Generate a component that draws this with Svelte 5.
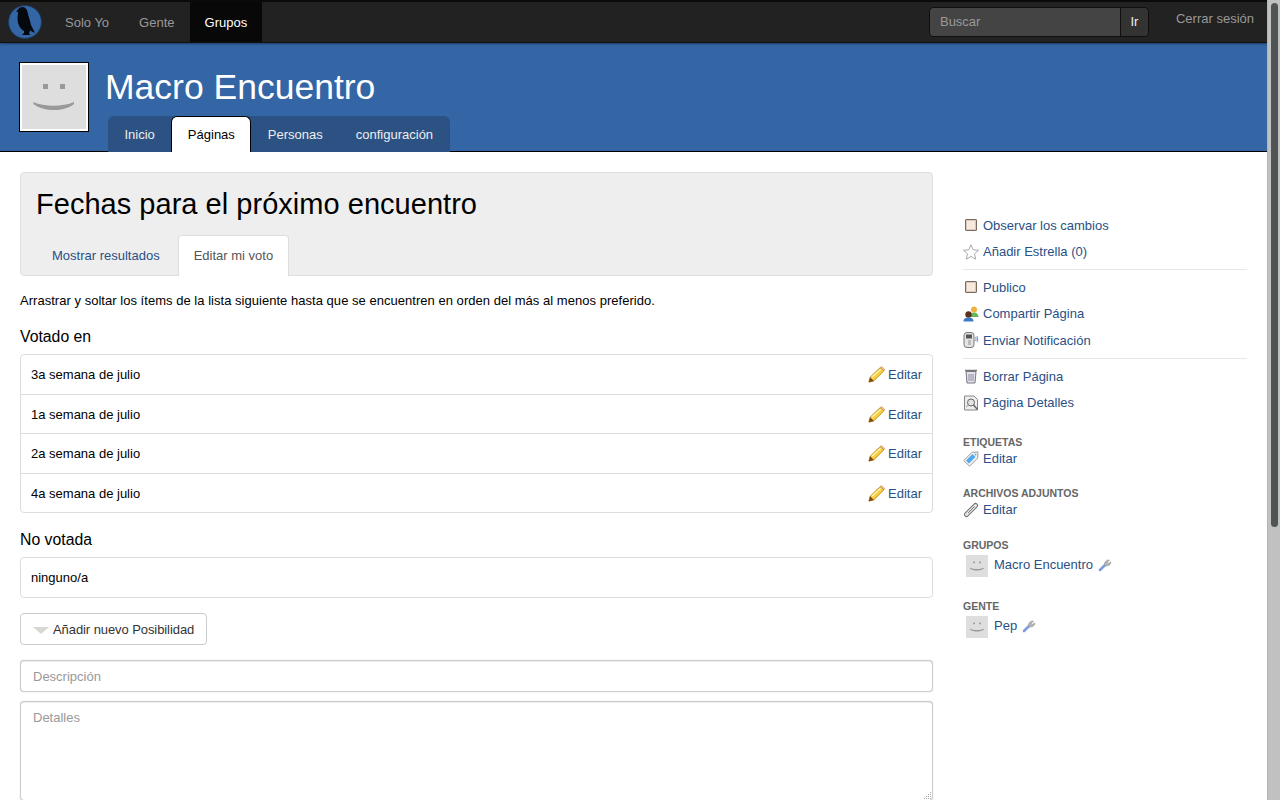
<script>
	const votes = ['3a semana de julio', '1a semana de julio', '2a semana de julio', '4a semana de julio']
	const navs = ['Solo Yo', 'Gente', 'Grupos']
	const tabs = ['Inicio', 'Páginas', 'Personas', 'configuración']
</script>

{#snippet face(size)}
	<svg class="face" width={size} height={size} viewBox="0 0 64 64">
		<rect width="64" height="64" fill="#dedede" />
		<rect x="21" y="19" width="5" height="5" fill="#999" />
		<rect x="38" y="19" width="5" height="5" fill="#999" />
		<path d="M11.500 37 C22 42 41 42 52 37 L52 39 C42 47 22 47 11.500 39 Z" fill="#999" />
	</svg>
{/snippet}

{#snippet pencil()}
	<svg class="ico" width="17" height="17" viewBox="0 0 16 16">
		<path d="M0.800 15.200 L2 10.500 L11.500 1.500 L15 4.500 L5.500 14 Z" fill="#f7cf45" stroke="#b9861a" stroke-width="0.8" />
		<path d="M11.500 1.500 L13 0.600 L15.500 3 L15 4.500 Z" fill="#f6c39a" stroke="#c88a50" stroke-width="0.6" />
		<path d="M0.800 15.200 L2 10.500 L5.500 14 Z" fill="#7a4a12" />
		<path d="M3.500 10.500 L12 3" stroke="#fff3a8" stroke-width="1.200" />
	</svg>
{/snippet}

{#snippet wrench()}
	<svg class="wrench" width="14" height="14" viewBox="0 0 14 14">
		<path d="M2 12 L7 7" stroke="#7f9be0" stroke-width="2.600" stroke-linecap="round" />
		<path d="M6.500 7.500 C6 4 8.500 1.500 11.500 2 L9.500 4.200 L10.300 5.500 L12.800 3.800 C13.200 6.800 10 9 6.500 7.500 Z" fill="#b5b5b5" stroke="#8f8f8f" stroke-width="0.500" />
	</svg>
{/snippet}

<div class="page">
	<div class="viewport">
		<nav class="topbar">
			<svg class="logo" width="34" height="34" viewBox="0 0 34 34">
				<circle cx="17" cy="17" r="16.500" fill="#3465a4" stroke="#1d3a60" />
				<path d="M14.500 2 C17 2 19 4 19.500 7 C20.500 11 22 16 23 20 L27 28 L22 25.500 L21 29 L23 30 L14 30 L16 28 L16 26 C12 24 9.500 19 9.500 13 C9.500 10 10.500 8 10 7 L8 6.500 C10 5 11 2 14.500 2 Z" fill="#05080c" />
			</svg>
			<ul class="navlinks">
				{#each navs as n}
					<li class:active={n === 'Grupos'}>{n}</li>
				{/each}
			</ul>
			<form class="search">
				<input type="text" placeholder="Buscar" />
				<button type="button">Ir</button>
			</form>
			<span class="logout">Cerrar sesión</span>
		</nav>

		<header class="banner">
			<div class="avatar">{@render face(64)}</div>
			<div class="banner-main">
				<h1>Macro Encuentro</h1>
				<ul class="grouptabs">
					{#each tabs as t}
						<li class:active={t === 'Páginas'}>{t}</li>
					{/each}
				</ul>
			</div>
		</header>

		<div class="body">
			<main>
				<div class="titlebox">
					<h2>Fechas para el próximo encuentro</h2>
					<ul class="pagetabs">
						<li><a href="#r">Mostrar resultados</a></li>
						<li class="active">Editar mi voto</li>
					</ul>
				</div>

				<p class="help">Arrastrar y soltar los ítems de la lista siguiente hasta que se encuentren en orden del más al menos preferido.</p>

				<h4 class="votado">Votado en</h4>
				<ul class="list">
					{#each votes as v}
						<li>
							<span>{v}</span>
							<a href="#e" class="edit">{@render pencil()}Editar</a>
						</li>
					{/each}
				</ul>

				<h4 class="novotada">No votada</h4>
				<ul class="list single">
					<li><span>ninguno/a</span></li>
				</ul>

				<button type="button" class="addbtn"><span class="tri"></span>Añadir nuevo Posibilidad</button>

				<input class="field" type="text" placeholder="Descripción" />
				<div class="areawrap">
					<textarea class="field area" placeholder="Detalles"></textarea>
					<svg class="grip" width="8" height="8" viewBox="0 0 8 8">
						<path d="M6 0h1v1H6z M4 2h1v1H4z M6 2h1v1H6z M2 4h1v1H2z M4 4h1v1H4z M6 4h1v1H6z M0 6h1v1H0z M2 6h1v1H2z M4 6h1v1H4z M6 6h1v1H6z" fill="#aaa" />
					</svg>
				</div>
			</main>

			<aside>
				<ul class="actions first">
					<li><span class="box"></span><a href="#a">Observar los cambios</a></li>
					<li>
						<svg class="ico" width="16" height="16" viewBox="0 0 16 16"><path d="M8 0.800 L10.200 5.800 L15.500 6.300 L11.500 9.900 L12.700 15.200 L8 12.400 L3.300 15.200 L4.500 9.900 L0.500 6.300 L5.800 5.800 Z" fill="#fff" stroke="#a8a8a8" /></svg>
						<a href="#a">Añadir Estrella (0)</a>
					</li>
				</ul>
				<ul class="actions">
					<li><span class="box"></span><a href="#a">Publico</a></li>
					<li>
						<svg class="ico" width="16" height="16" viewBox="0 0 16 16">
							<circle cx="11" cy="3.500" r="3" fill="#f0b040" />
							<path d="M7 11 C7 8 8.500 6.500 11 6.500 C13.500 6.500 15.500 8 15.500 11 Z" fill="#62b85a" />
							<circle cx="5.500" cy="8.500" r="3.200" fill="#5a3418" />
							<path d="M0.500 15.500 C0.500 12.500 2.500 11.500 5.500 11.500 C8.500 11.500 10.500 12.500 10.500 15.500 Z" fill="#3c78c8" />
						</svg>
						<a href="#a">Compartir Página</a>
					</li>
					<li>
						<svg class="ico" width="16" height="18" viewBox="0 0 16 18">
							<rect x="1" y="1.500" width="10" height="15" rx="3" fill="#e4e4e4" stroke="#777" />
							<rect x="3" y="3.500" width="6" height="4" fill="#555" />
							<rect x="5" y="9" width="3" height="5" fill="#bbb" />
							<path d="M12.500 6 Q14 8 12.500 10 M14 5 Q15.500 8 14 11" fill="none" stroke="#4f78c4" stroke-width="0.800" />
						</svg>
						<a href="#a">Enviar Notificación</a>
					</li>
				</ul>
				<ul class="actions last">
					<li>
						<svg class="ico" width="16" height="16" viewBox="0 0 16 16">
							<path d="M3 3.500 H13 L12 15 H4 Z" fill="#e2e2ea" stroke="#77777f" />
							<path d="M2 2.500 H14" stroke="#77777f" stroke-width="1.500" />
							<path d="M6 6 V13 M8 6 V13 M10 6 V13" stroke="#8c8ca0" />
						</svg>
						<a href="#a">Borrar Página</a>
					</li>
					<li>
						<svg class="ico" width="16" height="16" viewBox="0 0 16 16">
							<path d="M1.500 1 H11 L14.500 4.500 V15 H1.500 Z" fill="#eee" stroke="#888" />
							<circle cx="8" cy="7.500" r="3.500" fill="#e4e4e4" stroke="#666" />
							<path d="M10.500 10 L14.500 14.500" stroke="#666" stroke-width="1.500" />
							<path d="M3 12 L6 9.500" stroke="#999" />
						</svg>
						<a href="#a">Página Detalles</a>
					</li>
				</ul>

				<h5 class="s-tags">ETIQUETAS</h5>
				<div class="row">
					<svg class="ico" width="16" height="16" viewBox="0 0 16 16">
						<path d="M0.800 9.500 L9 1.300 L15 1 L14.700 7 L6.500 15.200 Z" fill="#f4f4f4" stroke="#9a9a9a" />
						<path d="M3 9.500 L9.500 3 L12.500 6 L6 12.500 Z" fill="#52a8ec" />
						<circle cx="12.500" cy="3.500" r="0.900" fill="#999" />
					</svg>
					<a href="#t">Editar</a>
				</div>

				<h5 class="s-files">ARCHIVOS ADJUNTOS</h5>
				<div class="row">
					<svg class="ico" width="16" height="16" viewBox="0 0 16 16">
						<path d="M3.500 12.500 L12.500 3.500" stroke="#6e6e6e" stroke-width="5" stroke-linecap="round" />
						<path d="M3.500 12.500 L12.500 3.500" stroke="#e8e8e8" stroke-width="3" stroke-linecap="round" />
						<path d="M5 11 L11.500 4.500" stroke="#777" stroke-width="1" />
					</svg>
					<a href="#t">Editar</a>
				</div>

				<h5 class="s-groups">GRUPOS</h5>
				<div class="entity">
					{@render face(22)}
					<a href="#g">Macro Encuentro</a>
					{@render wrench()}
				</div>

				<h5 class="s-people">GENTE</h5>
				<div class="entity">
					{@render face(22)}
					<a href="#g">Pep</a>
					{@render wrench()}
				</div>
			</aside>
		</div>
	</div>

	<div class="scrollbar"><div class="thumb"></div></div>
</div>

<style>
	:global(body) {
		overflow: hidden;
		font-family: "Liberation Sans", Arial, sans-serif;
		font-size: 13px;
		color: #000;
		background: #fff;
	}
	ul {
		list-style: none;
		margin: 0;
		padding: 0;
	}
	a {
		color: #2a5085;
		text-decoration: none;
	}
	.page {
		display: flex;
		height: 800px;
		overflow: hidden;
	}
	.viewport {
		width: 1267px;
		flex: none;
		overflow: hidden;
	}
	.scrollbar {
		flex: 1;
		background: #c1c1c1;
		border-left: 1px solid #b4b4b4;
		padding-top: 3px;
	}
	.thumb {
		width: 7px;
		height: 524px;
		margin-left: 3px;
		background: #4f5555;
		border-radius: 4px;
	}

	/* top bar */
	.topbar {
		display: flex;
		align-items: stretch;
		height: 40px;
		background: #222;
		border-top: 2px solid #0a0a0a;
		border-bottom: 1px solid #111;
		box-shadow: 0 1px 2px rgba(0, 0, 0, 0.4);
		position: relative;
	}
	.logo {
		margin: 3px 0 0 8px;
		flex: none;
	}
	.navlinks {
		display: flex;
		margin-left: 8px;
	}
	.navlinks li {
		padding: 14px 15px 0;
		color: #999;
		line-height: 14px;
	}
	.navlinks li.active {
		background: #080808;
		color: #fff;
	}
	.search {
		display: flex;
		margin: 5px 0 0 auto;
		height: 30px;
	}
	.search input {
		width: 192px;
		box-sizing: border-box;
		height: 30px;
		padding: 0 10px 2px;
		background: #444;
		border: 1px solid #0f0f0f;
		border-radius: 4px 0 0 4px;
		color: #ccc;
		font: 13px "Liberation Sans", Arial, sans-serif;
	}
	.search input::placeholder {
		color: #999;
		opacity: 1;
	}
	.search button {
		width: 29px;
		height: 30px;
		margin-left: -1px;
		background: #333;
		border: 1px solid #0f0f0f;
		border-radius: 0 4px 4px 0;
		color: #eee;
		font: 13px "Liberation Sans", Arial, sans-serif;
		padding: 0 0 2px;
	}
	.logout {
		color: #999;
		margin: 10px 13px 0 27px;
		line-height: 14px;
	}

	/* group banner */
	.banner {
		display: flex;
		height: 108px;
		background: #3465a4;
		border-bottom: 1px solid #000;
		padding-left: 20px;
	}
	.avatar {
		width: 64px;
		height: 64px;
		margin-top: 20px;
		border: 2px solid #fff;
		outline: 1px solid #000;
		box-sizing: content-box;
	}
	.face {
		display: block;
		flex: none;
	}
	.banner-main {
		margin-left: 17px;
		display: flex;
		flex-direction: column;
	}
	h1 {
		margin: 24px 0 0;
		font-size: 35.500px;
		font-weight: normal;
		line-height: 40px;
		color: #fff;
	}
	.grouptabs {
		display: flex;
		margin: 9px 0 0 3px;
		height: 36px;
		background: #2c5283;
		border-radius: 6px 6px 0 0;
		align-self: flex-start;
	}
	.grouptabs li {
		padding: 11px 16.500px 0;
		color: #eee;
		line-height: 15px;
	}
	.grouptabs li.active {
		background: #fff;
		color: #000;
		border: 1px solid #000;
		border-bottom: none;
		border-radius: 6px 6px 0 0;
		padding: 10px 15.500px 0;
		box-sizing: border-box;
		position: relative;
		z-index: 1;
		height: 36px;
	}

	/* main layout */
	.body {
		display: flex;
		padding: 20px 20px 0;
	}
	main {
		width: 913px;
		flex: none;
	}
	aside {
		width: 284px;
		margin-left: 30px;
		padding-top: 40px;
	}

	.titlebox {
		background: #eee;
		border: 1px solid #e0e0e0;
		border-radius: 4px;
		height: 102px;
	}
	h2 {
		margin: 0;
		padding: 14px 15px 0;
		font-size: 29px;
		font-weight: normal;
		line-height: 34px;
		letter-spacing: 0.030px;
	}
	.pagetabs {
		display: flex;
		margin: 14px 0 0 15px;
		height: 40px;
	}
	.pagetabs li {
		padding: 13px 16px 0;
		line-height: 15px;
		color: #555;
	}
	.pagetabs li.active {
		background: #fff;
		border: 1px solid #ddd;
		border-bottom: none;
		border-radius: 4px 4px 0 0;
		padding: 12px 15px 0;
		height: 41px;
		box-sizing: border-box;
		margin-left: 2px;
	}
	.help {
		margin: 17px 0 0;
		line-height: 15px;
		letter-spacing: 0.030px;
	}
	h4 {
		margin: 0;
		font-size: 15.800px;
		font-weight: normal;
		line-height: 18px;
	}
	.votado {
		margin-top: 20px;
	}
	.novotada {
		margin-top: 18px;
	}
	.list {
		margin-top: 8px;
		border: 1px solid #ddd;
		border-radius: 4px;
	}
	.list li {
		display: flex;
		justify-content: space-between;
		align-items: center;
		height: 39px;
		padding: 0 10px;
		border-top: 1px solid #ddd;
	}
	.list li:first-child {
		border-top: none;
	}
	.list li:nth-child(even) {
		height: 37px;
		padding-top: 1px;
	}
	.edit {
		display: flex;
		align-items: center;
		gap: 3px;
	}
	.ico {
		flex: none;
		display: block;
	}
	.addbtn {
		display: flex;
		align-items: center;
		height: 32px;
		margin-top: 15px;
		padding: 0 12px;
		background: #fff;
		border: 1px solid #ccc;
		border-radius: 4px;
		color: #333;
		font: 13px "Liberation Sans", Arial, sans-serif;
		letter-spacing: -0.080px;
	}
	.tri {
		width: 0;
		height: 0;
		border-left: 8px solid transparent;
		border-right: 8px solid transparent;
		border-top: 7px solid #d6d9d2;
		margin-right: 4px;
		margin-top: 2px;
	}
	.field {
		display: block;
		width: 100%;
		box-sizing: border-box;
		margin-top: 15px;
		padding: 0 12px;
		height: 32px;
		border: 1px solid #ccc;
		border-radius: 4px;
		box-shadow: inset 0 1px 1px rgba(0, 0, 0, 0.075), 0 0 1px rgba(0, 0, 0, 0.25);
		font: 13px "Liberation Sans", Arial, sans-serif;
		color: #555;
	}
	.field::placeholder {
		color: #999;
		opacity: 1;
	}
	.areawrap {
		position: relative;
		margin-top: 9px;
		height: 100px;
	}
	.area {
		margin-top: 0;
		height: 100px;
		padding: 8px 12px;
		resize: none;
	}
	.grip {
		position: absolute;
		right: 1px;
		top: 91px;
	}

	/* sidebar */
	.actions {
		border-bottom: 1px solid #e8e8e8;
		padding-bottom: 4px;
		margin-bottom: 4px;
	}
	.actions.last {
		border-bottom: none;
		padding-top: 0.500px;
	}
	.actions li {
		display: flex;
		align-items: center;
		height: 26.500px;
		gap: 4px;
	}
	.box {
		width: 10px;
		height: 10px;
		margin: 0 2px;
		background: #f9e9dc;
		border: 1px solid #7b6a60;
		border-radius: 1px;
		box-shadow: inset 0 0 0 1px rgba(123, 106, 96, 0.25);
		flex: none;
	}
	h5 {
		margin: 0;
		font-size: 10.500px;
		font-weight: bold;
		line-height: 12px;
		color: #666;
	}
	.s-tags {
		margin-top: 15.500px;
	}
	.s-files {
		margin-top: 20px;
	}
	.s-groups {
		margin-top: 21px;
	}
	.s-people {
		margin-top: 23px;
	}
	.row {
		display: flex;
		align-items: center;
		gap: 4px;
		height: 16px;
		margin-top: 3px;
	}
	.entity {
		display: flex;
		align-items: center;
		margin: 4px 0 0 3px;
		height: 22px;
	}
	.entity a {
		margin-left: 6px;
		margin-top: -3px;
	}
	.wrench {
		margin: -1px 0 0 5px;
	}
</style>
